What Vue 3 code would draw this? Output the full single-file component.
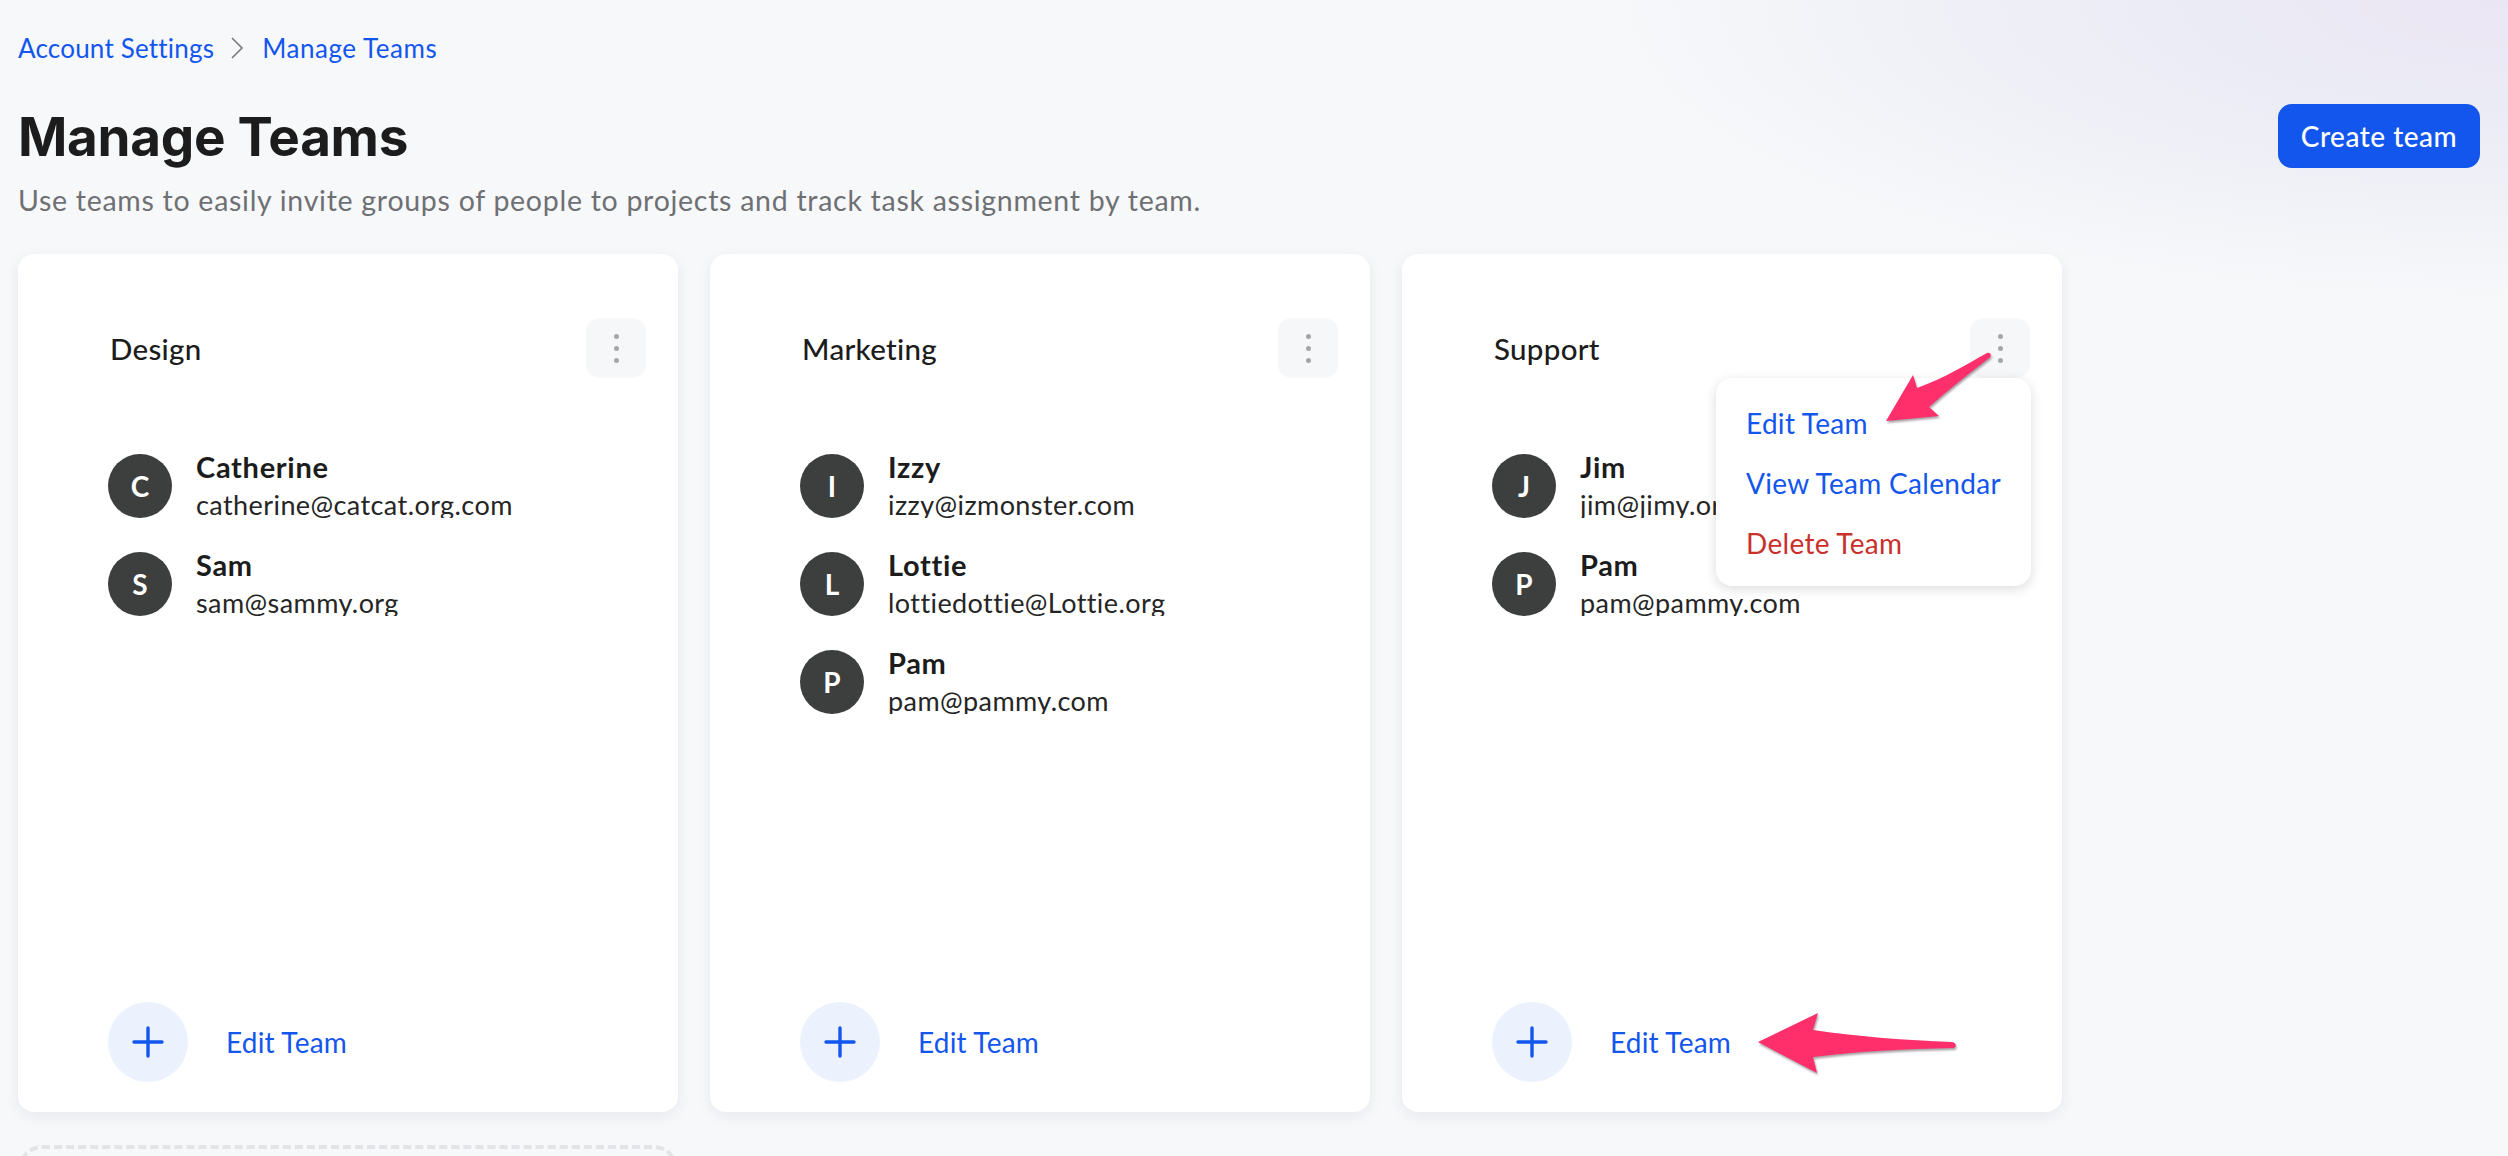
<script setup>
const teams = [
  { name: 'Design', members: [
    { i: 'C', n: 'Catherine', e: 'catherine@catcat.org.com' },
    { i: 'S', n: 'Sam', e: 'sam@sammy.org' } ] },
  { name: 'Marketing', members: [
    { i: 'I', n: 'Izzy', e: 'izzy@izmonster.com' },
    { i: 'L', n: 'Lottie', e: 'lottiedottie@Lottie.org' },
    { i: 'P', n: 'Pam', e: 'pam@pammy.com' } ] },
  { name: 'Support', menu: true, members: [
    { i: 'J', n: 'Jim', e: 'jim@jimy.org' },
    { i: 'P', n: 'Pam', e: 'pam@pammy.com' } ] }
]
</script>

<template>
  <div class="page">
    <nav class="crumbs">
      <a>Account Settings</a>
      <svg width="18" height="24" viewBox="0 0 18 24"><path d="M3 2l10 10L3 22" fill="none" stroke="#77797d" stroke-width="1.6"/></svg>
      <a class="current">Manage Teams</a>
    </nav>
    <header class="head">
      <div>
        <h1>Manage Teams</h1>
        <p>Use teams to easily invite groups of people to projects and track task assignment by team.</p>
      </div>
      <button class="create">Create team</button>
    </header>
    <section class="cards">
      <article v-for="t in teams" :key="t.name" class="card">
        <div class="top">
          <h2>{{ t.name }}</h2>
          <div class="more"><i></i><i></i><i></i></div>
        </div>
        <ul class="members">
          <li v-for="m in t.members" :key="m.e">
            <span class="avatar">{{ m.i }}</span>
            <div class="who">
              <b>{{ m.n }}</b>
              <span>{{ m.e }}</span>
            </div>
          </li>
        </ul>
        <div class="foot">
          <span class="add">
            <svg width="32" height="32" viewBox="0 0 32 32"><path d="M16 2v28M2 16h28" fill="none" stroke="#1356ee" stroke-width="3.4" stroke-linecap="round"/></svg>
          </span>
          <a>Edit Team</a>
        </div>
        <div v-if="t.menu" class="menu">
          <a>Edit Team</a>
          <a>View Team Calendar</a>
          <a class="danger">Delete Team</a>
        </div>
      </article>
    </section>
    <div class="dashed"></div>
    <svg class="arrows" width="2508" height="1156" viewBox="0 0 2508 1156">
      <path d="M1886 421L1913 375L1917 388C1945 378 1965 365 1987 353C1991 352 1992 356 1989 358C1970 373 1948 390 1929 407L1939 416Z" />
      <path d="M1758 1042L1818 1013L1813 1030C1860 1037 1905 1040 1952 1042C1957 1043 1957 1048 1952 1048C1905 1049 1860 1051 1813 1057L1817 1073Z" />
    </svg>
  </div>
</template>

<style>
html, body { margin: 0; padding: 0; }
</style>

<style scoped>
.page {
  position: relative;
  width: 2508px;
  height: 1156px;
  overflow: hidden;
  box-sizing: border-box;
  padding: 30px 28px 0 18px;
  background:
    radial-gradient(ellipse 900px 300px at 100% 0, #ebe6f4 0%, rgba(232, 233, 244, .8) 40%, rgba(247, 248, 250, 0) 100%),
    #f7f8fa;
  font-family: Lato, "Open Sans", sans-serif;
  color: #1c1c1c;
}
.crumbs {
  display: flex;
  align-items: center;
  gap: 15px;
  height: 36px;
  font-size: 26px;
  letter-spacing: .2px;
  color: #1356ee;
}
.crumbs .current { letter-spacing: .55px; }
.head {
  display: flex;
  justify-content: space-between;
  align-items: flex-start;
  margin-top: 38px;
}
h1 {
  margin: 0;
  font-size: 53px;
  line-height: 66px;
  font-weight: 700;
  font-family: Inter, Lato, sans-serif;
  letter-spacing: -.3px;
}
.head p {
  margin: 11px 0 0;
  font-size: 28.5px;
  line-height: 38px;
  color: #6e7073;
  letter-spacing: .72px;
}
.create {
  width: 202px;
  height: 64px;
  border: 0;
  border-radius: 14px;
  background: #1356ee;
  color: #fff;
  font: 500 28px Lato, sans-serif;
  letter-spacing: .5px;
}
.cards {
  display: flex;
  gap: 32px;
  margin-top: 35px;
}
.card {
  position: relative;
  width: 660px;
  height: 858px;
  box-sizing: border-box;
  padding: 64px 32px 30px 92px;
  background: #fff;
  border-radius: 16px;
  box-shadow: 0 4px 14px rgba(30, 35, 50, .07);
  display: flex;
  flex-direction: column;
}
.top {
  display: flex;
  justify-content: space-between;
  align-items: center;
  height: 60px;
}
h2 {
  margin: 0;
  font-size: 29.5px;
  font-weight: 500;
  letter-spacing: .3px;
}
.more {
  width: 60px;
  height: 60px;
  border-radius: 14px;
  background: #f6f7f9;
  display: flex;
  flex-direction: column;
  align-items: center;
  justify-content: center;
  gap: 7px;
}
.more i {
  width: 5px;
  height: 5px;
  border-radius: 50%;
  background: #a5a6a8;
}
.members {
  list-style: none;
  margin: 76px 0 0 -2px;
  padding: 0;
  display: flex;
  flex-direction: column;
  gap: 34px;
  flex: 1;
}
.members li {
  display: flex;
  align-items: center;
  gap: 24px;
  height: 64px;
}
.avatar {
  width: 64px;
  height: 64px;
  border-radius: 50%;
  background: #3d3e3e;
  color: #fff;
  font-size: 28px;
  font-weight: 700;
  display: flex;
  align-items: center;
  justify-content: center;
}
.who {
  display: flex;
  flex-direction: column;
  gap: 5px;
  margin-top: -2px;
}
.who b {
  font-size: 29px;
  line-height: 34px;
  font-weight: 700;
  letter-spacing: .7px;
}
.who span {
  font-size: 27px;
  line-height: 32px;
  letter-spacing: .42px;
  height: 29px;
  margin-bottom: 2px;
  overflow: hidden;
  color: #252525;
}
.foot {
  display: flex;
  align-items: center;
  gap: 38px;
  margin-left: -2px;
  font-size: 28px;
  color: #1356ee;
  letter-spacing: .2px;
}
.add {
  width: 80px;
  height: 80px;
  border-radius: 50%;
  background: #ebf2fe;
  display: flex;
  align-items: center;
  justify-content: center;
}
.menu {
  position: absolute;
  left: 314px;
  top: 124px;
  width: 315px;
  height: 208px;
  box-sizing: border-box;
  padding: 15px 0 15px 30px;
  background: #fff;
  border-radius: 16px;
  box-shadow: 0 3px 12px rgba(30, 35, 50, .16);
  display: flex;
  flex-direction: column;
  justify-content: space-between;
  font-size: 28px;
  line-height: 60px;
  letter-spacing: .3px;
  color: #1356ee;
}
.menu .danger { color: #c9302c; }
.dashed {
  width: 660px;
  height: 120px;
  box-sizing: border-box;
  margin-top: 33px;
  border: 4px dashed #e3e4e7;
  border-radius: 24px;
}
.arrows {
  position: absolute;
  left: 0;
  top: 0;
  fill: #ff2f6b;
  filter: drop-shadow(1px 2px 1px rgba(60, 40, 50, .45));
  pointer-events: none;
}
</style>
